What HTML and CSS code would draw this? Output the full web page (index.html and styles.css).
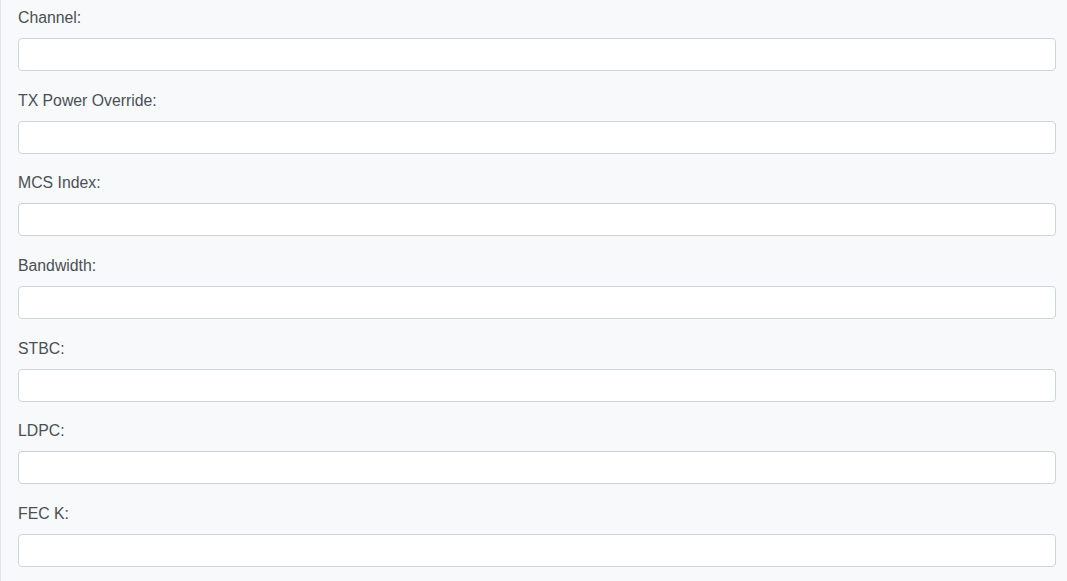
FILE: index.html
```html
<!DOCTYPE html>
<html lang="en">
<head>
  <meta charset="UTF-8" />
  <meta name="viewport" content="width=device-width, initial-scale=1.0"/>
  <title>Radio Settings</title>
  <link rel="stylesheet" href="styles.css">
</head>
<body>

  <main class="panel">
    <form class="settings">
      <div class="field">
        <label for="channel">Channel:</label>
        <input type="text" id="channel">
      </div>
      <div class="field">
        <label for="txpower">TX Power Override:</label>
        <input type="text" id="txpower">
      </div>
      <div class="field">
        <label for="mcs">MCS Index:</label>
        <input type="text" id="mcs">
      </div>
      <div class="field">
        <label for="bandwidth">Bandwidth:</label>
        <input type="text" id="bandwidth">
      </div>
      <div class="field">
        <label for="stbc">STBC:</label>
        <input type="text" id="stbc">
      </div>
      <div class="field">
        <label for="ldpc">LDPC:</label>
        <input type="text" id="ldpc">
      </div>
      <div class="field">
        <label for="feck">FEC K:</label>
        <input type="text" id="feck">
      </div>
    </form>
  </main>

</body>
</html>
```

FILE: styles.css
```css
* {
  box-sizing: border-box;
  margin: 0;
  padding: 0;
}

html, body {
  height: 100%;
}

body {
  font-family: 'Liberation Sans', Arial, sans-serif;
  background-color: #f8f9fa;
  color: #4a4f55;
  font-size: 15.8px;
  line-height: 24px;
}

.panel {
  min-height: 100%;
  border-left: 1px solid #e3e6ea;
  padding: 6px 11px 0 17px;
}

.field {
  margin-bottom: 17.67px;
}

.field label {
  display: block;
  margin-bottom: 8px;
}

.field input {
  display: block;
  width: 100%;
  height: 33px;
  padding: 6px 12px;
  font: inherit;
  color: #495057;
  background: #fff;
  border: 1px solid #ced4da;
  border-radius: 4px;
}
```
